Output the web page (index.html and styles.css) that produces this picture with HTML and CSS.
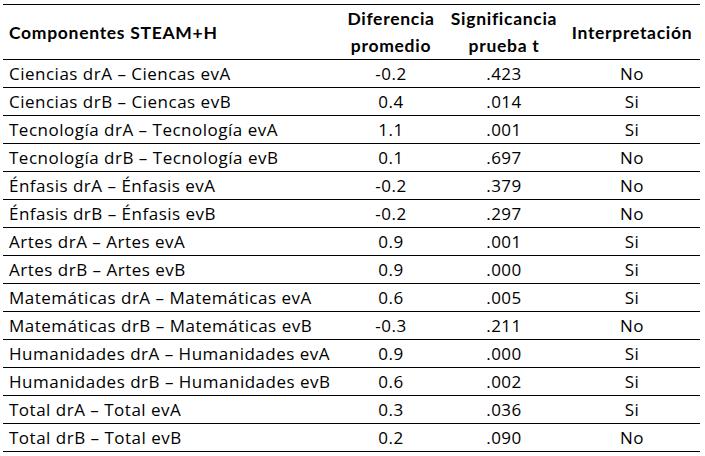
FILE: index.html
```html
<!DOCTYPE html>
<html lang="es">
<head>
<meta charset="utf-8">
<link rel="stylesheet" href="styles.css">
</head>
<body>
<table class="results">
  <colgroup>
    <col class="c-name">
    <col class="c-diff">
    <col class="c-sig">
    <col class="c-int">
  </colgroup>
  <thead>
    <tr>
      <th class="name">Componentes STEAM+H</th>
      <th>Diferencia<br>promedio</th>
      <th>Significancia<br>prueba t</th>
      <th class="int">Interpretación</th>
    </tr>
  </thead>
  <tbody>
    <tr><td class="name">Ciencias drA – Ciencas evA</td><td>-0.2</td><td>.423</td><td class="int">No</td></tr>
    <tr><td class="name">Ciencias drB – Ciencas evB</td><td>0.4</td><td>.014</td><td class="int">Si</td></tr>
    <tr><td class="name">Tecnología drA – Tecnología evA</td><td>1.1</td><td>.001</td><td class="int">Si</td></tr>
    <tr><td class="name">Tecnología drB – Tecnología evB</td><td>0.1</td><td>.697</td><td class="int">No</td></tr>
    <tr><td class="name">Énfasis drA – Énfasis evA</td><td>-0.2</td><td>.379</td><td class="int">No</td></tr>
    <tr><td class="name">Énfasis drB – Énfasis evB</td><td>-0.2</td><td>.297</td><td class="int">No</td></tr>
    <tr><td class="name">Artes drA – Artes evA</td><td>0.9</td><td>.001</td><td class="int">Si</td></tr>
    <tr><td class="name">Artes drB – Artes evB</td><td>0.9</td><td>.000</td><td class="int">Si</td></tr>
    <tr><td class="name">Matemáticas drA – Matemáticas evA</td><td>0.6</td><td>.005</td><td class="int">Si</td></tr>
    <tr><td class="name">Matemáticas drB – Matemáticas evB</td><td>-0.3</td><td>.211</td><td class="int">No</td></tr>
    <tr><td class="name">Humanidades drA – Humanidades evA</td><td>0.9</td><td>.000</td><td class="int">Si</td></tr>
    <tr><td class="name">Humanidades drB – Humanidades evB</td><td>0.6</td><td>.002</td><td class="int">Si</td></tr>
    <tr><td class="name">Total drA – Total evA</td><td>0.3</td><td>.036</td><td class="int">Si</td></tr>
    <tr><td class="name">Total drB – Total evB</td><td>0.2</td><td>.090</td><td class="int">No</td></tr>
  </tbody>
</table>
</body>
</html>
```
FILE: styles.css
```css
html, body {
  margin: 0;
  padding: 0;
  background: #ffffff;
}
body {
  padding: 4px 0 0 3px;
  font-family: "Open Sans", "Liberation Sans", sans-serif;
  font-size: 17px;
  letter-spacing: 0.5px;
  color: #000000;
}
.results {
  border-collapse: collapse;
  table-layout: fixed;
  width: 697px;
}
.c-name { width: 339px; }
.c-diff { width: 98px; }
.c-sig { width: 128px; }
.c-int { width: 132px; }
.results th,
.results td {
  padding: 0;
  text-align: center;
  vertical-align: middle;
  border-top: 1px solid #000;
  border-bottom: 1px solid #000;
}
.results th {
  height: 54px;
  font-family: Lato, "Open Sans", sans-serif;
  font-size: 17.5px;
  font-weight: 700;
  letter-spacing: 0.7px;
  line-height: 27px;
}
.results td {
  height: 26px;
  line-height: 26px;
  padding-top: 1px;
}
.results .name {
  text-align: left;
  padding-left: 6px;
}
.results .int {
  padding-right: 4px;
}
```
